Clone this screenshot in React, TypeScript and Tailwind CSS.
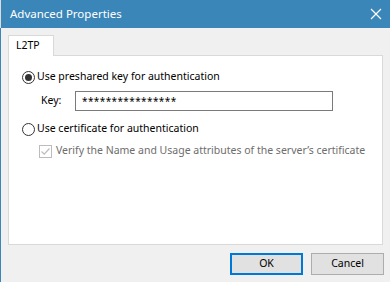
import React from "react";

const font = { fontFamily: '"Noto Sans", "Open Sans", sans-serif' };

function Radio({ checked }: { checked?: boolean }) {
  return (
    <div className="w-[13px] h-[13px] rounded-full border border-[#333333] bg-white flex items-center justify-center shrink-0">
      {checked && <div className="w-[7px] h-[7px] rounded-full bg-[#333333]" />}
    </div>
  );
}

export default function App() {
  return (
    <div
      className="w-[390px] h-[282px] bg-[#f0f0f0] flex flex-col text-[10.5px] text-black overflow-hidden"
      style={font}
    >
      <div className="h-[28px] bg-[#3a86b8] flex items-center justify-between shrink-0 border-l border-[#dcdcdc]">
        <span className="pl-[9px] text-white text-[11.5px]">Advanced Properties</span>
        <svg width="12" height="12" viewBox="0 0 12 12" className="mr-[8px]">
          <path d="M1 1 L11 11 M11 1 L1 11" stroke="white" strokeWidth="1.2" />
        </svg>
      </div>
      <div className="flex-1 flex flex-col border-l border-[#3a86b8]">
        <div className="pt-[7px] pl-[7px]">
          <div className="w-[46px] h-[21px] bg-white border border-b-0 border-[#d9d9d9] flex items-center pl-[7px] -mb-px relative z-10">
            L2TP
          </div>
        </div>
        <div className="ml-[7px] w-[375px] h-[190px] bg-white border border-[#d9d9d9] flex flex-col pt-[13px] pl-[13px]">
          <div className="h-[16px] flex items-center gap-[2px]">
            <Radio checked />
            <span className="whitespace-nowrap">Use preshared key for authentication</span>
          </div>
          <div className="mt-[6px] h-[20px] flex items-center">
            <span className="pl-[19px] w-[53px]">Key:</span>
            <div className="w-[258px] h-[20px] border border-[#7a7a7a] flex items-center pl-[6px] text-[10px] tracking-[0.4px]">
              ****************
            </div>
          </div>
          <div className="mt-[10px] h-[16px] flex items-center gap-[2px]">
            <Radio />
            <span className="whitespace-nowrap">Use certificate for authentication</span>
          </div>
          <div className="mt-[6px] h-[16px] flex items-center gap-[4px] pl-[17px]">
            <div className="w-[13px] h-[13px] border border-[#bcbcbc] bg-white flex items-center justify-center shrink-0">
              <svg width="11" height="11" viewBox="0 0 11 11">
                <path d="M1.5 5.5 L4.2 8.2 L9.5 2.5" stroke="#bcbcbc" strokeWidth="1.2" fill="none" />
              </svg>
            </div>
            <span className="text-[#6d6d6d] whitespace-nowrap">
              Verify the Name and Usage attributes of the server’s certificate
            </span>
          </div>
        </div>
        <div className="flex justify-end gap-[8px] pr-[6px] mt-[8px]">
          <button className="w-[73px] h-[22px] bg-[#e1e1e1] border-2 border-[#0078d7] flex items-center justify-center">
            OK
          </button>
          <button className="w-[73px] h-[22px] bg-[#e1e1e1] border border-[#adadad] flex items-center justify-center">
            Cancel
          </button>
        </div>
      </div>
    </div>
  );
}
